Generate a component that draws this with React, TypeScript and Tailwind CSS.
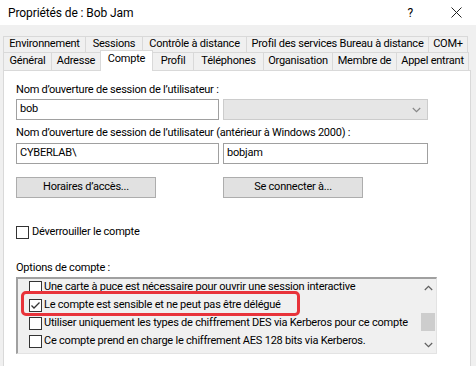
import React from "react";

const FONT = "font-['Roboto','Liberation_Sans',sans-serif]";

function Tab({ label, w, last, sel }: { label: string; w: string; last?: boolean; sel?: boolean }) {
  if (sel) {
    return (
      <div
        className={`${w} h-[21px] -mb-px -mr-px relative z-10 bg-white border-l border-t border-r border-[#d9d9d9] flex items-center justify-center pb-[3px] whitespace-nowrap`}
      >
        {label}
      </div>
    );
  }
  return (
    <div
      className={`${w} h-full bg-[#f0f0f0] border-l border-t border-[#d9d9d9] ${last ? "border-r" : ""} flex items-center justify-center whitespace-nowrap`}
    >
      {label}
    </div>
  );
}

function Chevron({ up, color = "#606060" }: { up?: boolean; color?: string }) {
  return (
    <svg width="9" height="6" viewBox="0 0 9 6">
      <polyline
        points={up ? "0.8,5 4.5,1.3 8.2,5" : "0.8,1 4.5,4.7 8.2,1"}
        fill="none"
        stroke={color}
        strokeWidth="1.2"
      />
    </svg>
  );
}

function Box({ checked }: { checked?: boolean }) {
  return (
    <div className="w-[13px] h-[13px] shrink-0 border border-[#333333] bg-white flex items-center justify-center">
      {checked && (
        <svg width="11" height="11" viewBox="0 0 11 11">
          <polyline points="1.5,5.5 4,8 9.5,2.5" fill="none" stroke="#333" strokeWidth="1.3" />
        </svg>
      )}
    </div>
  );
}

const items = [
  { t: "Une carte à puce est nécessaire pour ouvrir une session interactive" },
  { t: "Le compte est sensible et ne peut pas être délégué", c: true },
  { t: "Utiliser uniquement les types de chiffrement DES via Kerberos pour ce compte" },
  { t: "Ce compte prend en charge le chiffrement AES 128 bits via Kerberos." },
  { t: "Ce compte prend en charge le chiffrement AES 256 bits via Kerberos." },
];

export default function App() {
  return (
    <div className={`w-[476px] h-[366px] bg-[#f0f0f0] overflow-hidden relative text-[11px] tracking-[-0.22px] text-black ${FONT}`}>
      {/* Title bar */}
      <div className="h-[25px] bg-white flex items-center pl-[8px] pr-[14px]">
        <span className="text-[12px] tracking-[-0.1px] text-black">Propriétés de : Bob Jam</span>
        <span className="ml-auto text-[12px] mr-[38px]">?</span>
        <svg width="11" height="11" viewBox="0 0 11 11">
          <path d="M0.5 0.5 L10.5 10.5 M10.5 0.5 L0.5 10.5" stroke="#222" strokeWidth="1" />
        </svg>
      </div>

      {/* Tabs */}
      <div className="mt-[11px] ml-[3px]">
        <div className="flex h-[16px]">
          <Tab label="Environnement" w="w-[82px]" />
          <Tab label="Sessions" w="w-[57px]" />
          <Tab label="Contrôle à distance" w="w-[104px]" />
          <Tab label="Profil des services Bureau à distance" w="w-[182px]" />
          <Tab label="COM+" w="w-[40px]" last />
        </div>
        <div className="flex h-[18px] items-end">
          <Tab label="Général" w="w-[48px]" />
          <Tab label="Adresse" w="w-[49px]" />
          <Tab label="Compte" w="w-[53px]" sel />
          <Tab label="Profil" w="w-[41px]" />
          <Tab label="Téléphones" w="w-[70px]" />
          <Tab label="Organisation" w="w-[69px]" />
          <Tab label="Membre de" w="w-[64px]" />
          <Tab label="Appel entrant" w="w-[73px]" last />
        </div>
      </div>

      {/* Panel */}
      <div className="ml-[3px] w-[468px] h-[300px] bg-white border border-[#d9d9d9] pl-[12px] pt-[12px] flex flex-col">
        <div className="h-[14px] leading-[14px] whitespace-nowrap">Nom d’ouverture de session de l’utilisateur :</div>
        <div className="mt-[2px] flex gap-[4px]">
          <div className="w-[203px] h-[21px] border border-[#a0a0a0] bg-white flex items-center pl-[3px]">bob</div>
          <div className="w-[205px] h-[21px] border border-[#cccccc] bg-[#e6e6e6] flex items-center justify-end pr-[6px]">
            <Chevron color="#888888" />
          </div>
        </div>
        <div className="mt-[6px] h-[14px] leading-[14px] whitespace-nowrap">
          Nom d’ouverture de session de l’utilisateur (antérieur à Windows 2000) :
        </div>
        <div className="mt-[3px] flex gap-[4px]">
          <div className="w-[203px] h-[21px] border border-[#a0a0a0] bg-white flex items-center pl-[3px]">CYBERLAB\</div>
          <div className="w-[205px] h-[21px] border border-[#a0a0a0] bg-white flex items-center pl-[3px]">bobjam</div>
        </div>
        <div className="mt-[13px] flex gap-[67px]">
          <div className="w-[140px] h-[21px] border border-[#adadad] bg-[#e1e1e1] flex items-center justify-center">
            Horaires d’accès...
          </div>
          <div className="w-[140px] h-[21px] border border-[#adadad] bg-[#e1e1e1] flex items-center justify-center">
            Se connecter à...
          </div>
        </div>
        <div className="mt-[27px] h-[14px] flex items-center gap-[3px]">
          <Box />
          <span>Déverrouiller le compte</span>
        </div>
        <div className="mt-[22px] h-[14px] leading-[14px]">Options de compte :</div>
        <div className="mt-[2px] w-[421px] h-[77px] border-t-2 border-l-2 border-[#a0a0a0] border-r border-b border-r-[#e3e3e3] border-b-[#e3e3e3] bg-[#f0f0f0] flex overflow-hidden">
          <div className="flex-1 overflow-hidden -mt-px">
            {items.map((it, i) => (
              <div key={i} className="h-[18px] flex items-center pl-[11px] gap-[2px] whitespace-nowrap">
                <Box checked={it.c} />
                <span>{it.t}</span>
              </div>
            ))}
          </div>
          <div className="w-[16px] flex flex-col">
            <div className="h-[17px] flex items-center justify-center">
              <Chevron up />
            </div>
            <div className="flex-1">
              <div className="mt-[17px] h-[18px] mx-[1px] bg-[#cdcdcd]" />
            </div>
            <div className="h-[17px] flex items-center justify-center">
              <Chevron />
            </div>
          </div>
        </div>
      </div>

      {/* Red highlight annotation */}
      <div className="absolute left-[21px] top-[291px] w-[279px] h-[25px] border-[3px] border-[#e8333a] rounded-[5px]" />
    </div>
  );
}
